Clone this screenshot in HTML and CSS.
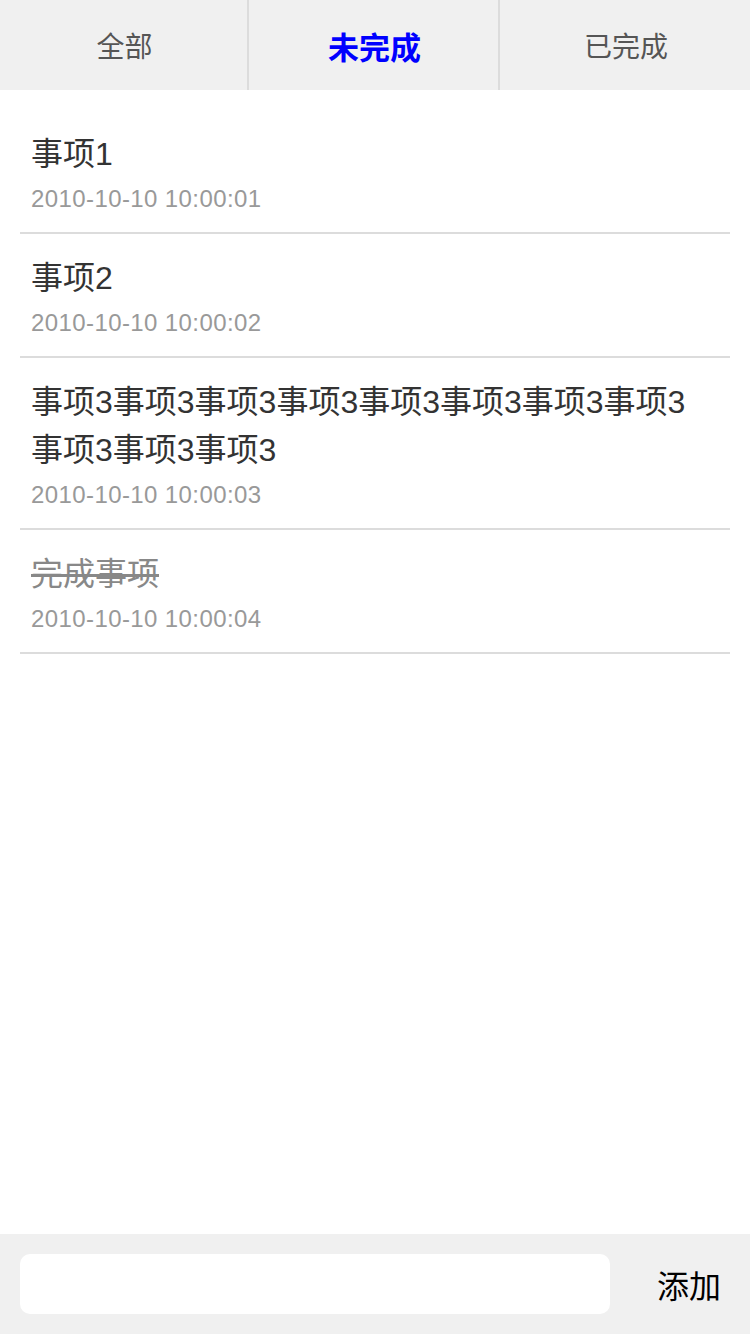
FILE: index.html
```html
<!DOCTYPE html>
<html lang="zh-CN">
<head>
<meta charset="utf-8">
<title>Todo</title>
<link rel="stylesheet" href="styles.css">
</head>
<body>
<div class="app">
  <nav class="tabs">
    <div class="tab">全部</div>
    <div class="tab tab-active">未完成</div>
    <div class="tab">已完成</div>
  </nav>
  <ul class="list">
    <li class="item">
      <div class="title">事项1</div>
      <div class="date">2010-10-10 10:00:01</div>
    </li>
    <li class="item">
      <div class="title">事项2</div>
      <div class="date">2010-10-10 10:00:02</div>
    </li>
    <li class="item">
      <div class="title">事项3事项3事项3事项3事项3事项3事项3事项3事项3事项3事项3</div>
      <div class="date">2010-10-10 10:00:03</div>
    </li>
    <li class="item item-done">
      <div class="title">完成事项</div>
      <div class="date">2010-10-10 10:00:04</div>
    </li>
  </ul>
  <footer class="footer">
    <input class="input" type="text">
    <button class="add" type="button">添加</button>
  </footer>
</div>
</body>
</html>
```
FILE: styles.css
```css
* { box-sizing: border-box; }
html, body { margin: 0; padding: 0; }
body {
  font-family: "Liberation Sans", "Noto Sans CJK SC", sans-serif;
  background: #fff;
}
.app {
  display: flex;
  flex-direction: column;
  height: 1334px;
}
.tabs {
  display: grid;
  grid-template-columns: 249px 251px 250px;
  height: 90px;
  background: #f0f0f0;
}
.tab {
  display: flex;
  align-items: center;
  justify-content: center;
  font-size: 28px;
  color: #555;
  border-right: 2px solid #dcdcdc;
  padding-left: 2px;
}
.tab:last-child { border-right: none; }
.tab-active {
  color: #0000ff;
  font-weight: bold;
  font-size: 31px;
}
.list {
  flex: 1;
  list-style: none;
  margin: 0;
  padding: 20px 20px 0;
}
.item {
  padding: 20px 20px 15px 11px;
  border-bottom: 2px solid #dcdcdc;
}
.title {
  font-size: 32px;
  line-height: 48px;
  color: #333;
}
.date {
  margin-top: 3px;
  font-size: 24px;
  line-height: 36px;
  letter-spacing: 0.4px;
  color: #999;
}
.item-done .title {
  color: #888;
  text-decoration: line-through;
}
.footer {
  display: flex;
  align-items: center;
  height: 100px;
  padding-left: 20px;
  background: #f0f0f0;
}
.input {
  flex: 1;
  height: 60px;
  border: none;
  border-radius: 10px;
  background: #fff;
  outline: none;
}
.add {
  width: 140px;
  height: 100px;
  border: none;
  background: transparent;
  font-family: "Liberation Sans", "Noto Sans CJK SC", sans-serif;
  font-size: 32px;
  color: #000;
  padding: 0 0 0 18px;
}
```
